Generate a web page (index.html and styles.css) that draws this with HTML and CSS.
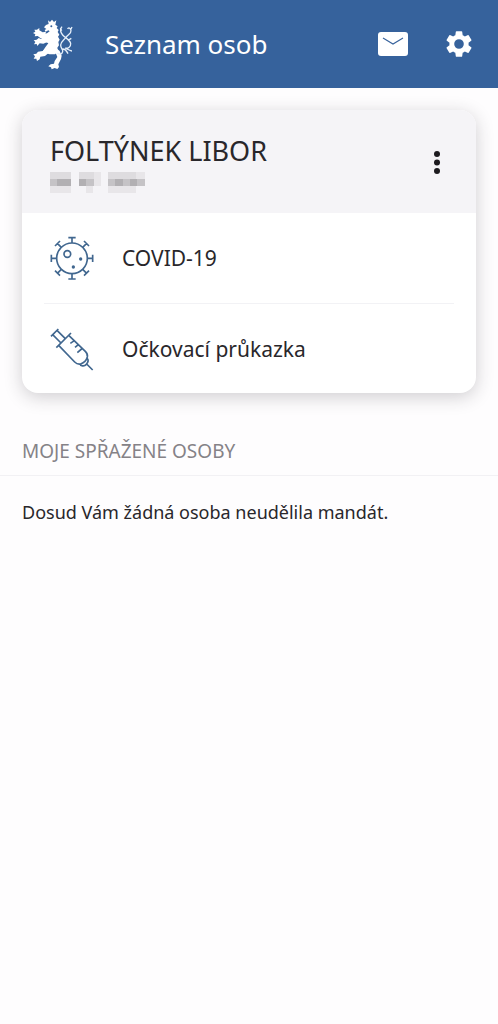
FILE: index.html
```html
<!DOCTYPE html>
<html lang="cs">
<head>
  <meta charset="UTF-8" />
  <title>Seznam osob</title>
  <meta name="viewport" content="width=device-width, initial-scale=1.0" />
  <link rel="stylesheet" href="styles.css">
</head>
<body>

  <header class="header">
    <svg class="logo" viewBox="25 20 120 153" aria-hidden="true">
      <!-- crown, head, body -->
      <path class="lion" d="M70 24l6 5 6-7 6 7 7-5-3 13 7 5-3 5 6 6-3 6 5 8-4 6 5 9-4 7 2 10-5 7 2 10-9 10-16 0-14-4-6-7 8-12 8-10-8-4-10-6-6-10 8-8 12-2 8-6-4-3-8 4-3-5 5-3-7-5 6-7 8-3z" />
      <!-- front legs -->
      <path class="lion" d="M64 58l-10 2-10-6 0-7-7 5-8 0 3 6-7 4 7 4-2 6 9-1 8 6 12 1zM62 78l-12 2-8-3-6 5-9 2 5 5-4 7 8-1 2 6 7-8 11 1 14-6z" />
      <!-- hind legs -->
      <path class="lion" d="M66 106l-12 10-14 2-5 6-9 2 5 6-4 7 8 0 2 7 8-5 2-8 14-2 14-12zM80 116l14 8 4 10-8 12-2 8-10 2-7 6 8 3 2 6 9-4 8 3 5-6-2-8 8-16 2-10-6-14-10-8z" />
      <path class="tail" d="M98 122c8 6 14 4 16-4c2-6-6-10-6-20c0-10 9-14 15-22c8-10 17-12 16-21c-1-8-8-11-10-5M112 43c-6 8-5 17 2 25c8 9 23 15 24 26c1 10-9 16-17 13M114 110c6 0 13 8 16 14M107 46l4 9M138 52l4-8M130 84l10-6M122 108c8 2 14 8 20 8" />
      <circle class="eye" cx="80" cy="42" r="3" />
    </svg>
    <h1>Seznam osob</h1>
    <button class="icon-btn" type="button" aria-label="Zprávy">
      <svg class="icon" viewBox="0 0 32 32">
        <rect x="1" y="4" width="30" height="24" rx="3" fill="#fff" />
        <path d="M6 10l10 6 10-6" fill="none" stroke="#36629c" stroke-width="1.1" />
      </svg>
    </button>
    <button class="icon-btn" type="button" aria-label="Nastavení">
      <svg class="icon" viewBox="0 0 24 24">
        <path fill="#fff" d="M19.14 12.94c.04-.3.06-.61.06-.94 0-.32-.02-.64-.07-.94l2.03-1.58a.49.49 0 0 0 .12-.61l-1.92-3.32a.49.49 0 0 0-.59-.22l-2.39.96a7 7 0 0 0-1.62-.94l-.36-2.54a.48.48 0 0 0-.48-.41h-3.84a.48.48 0 0 0-.47.41l-.36 2.54c-.59.24-1.13.57-1.62.94l-2.39-.96a.48.48 0 0 0-.59.22L2.74 8.87a.48.48 0 0 0 .12.61l2.03 1.58c-.05.3-.09.63-.09.94s.02.64.07.94l-2.03 1.58a.49.49 0 0 0-.12.61l1.92 3.32c.12.22.37.29.59.22l2.39-.96c.5.38 1.03.7 1.62.94l.36 2.54c.05.24.24.41.48.41h3.84c.24 0 .44-.17.47-.41l.36-2.54a7 7 0 0 0 1.62-.94l2.39.96c.22.08.47 0 .59-.22l1.92-3.32a.48.48 0 0 0-.12-.61zM12 15.6a3.6 3.6 0 1 1 0-7.2 3.6 3.6 0 0 1 0 7.2z" />
      </svg>
    </button>
  </header>

  <main>
    <section class="card">
      <div class="card-head">
        <div class="person">
          <h2>FOLTÝNEK LIBOR</h2>
          <!-- hidden birth date -->
          <svg class="masked" viewBox="0 0 96 21" shape-rendering="crispEdges" aria-hidden="true">
            <path fill="#dedcdf" d="M0 0h21v7H0zM29 0h15v7H29zM58 0h28v7H58z" />
            <path fill="#c5c3c6" d="M0 7h21v7H0zM29 7h15v7H29zM58 7h37v7H58z" />
            <path fill="#b2b0b3" d="M7 7h14v7H7zM29 7h7v7h-7zM65 7h8v7h-8zM80 7h7v7h-7z" />
            <path fill="#e8e6e9" d="M0 14h21v7H0zM36 14h7v7h-7zM44 0h7v14h-7zM58 14h28v7H58zM86 0h9v7h-9z" />
          </svg>
        </div>
        <button class="icon-btn" type="button" aria-label="Další možnosti">
          <svg class="icon" viewBox="0 0 32 32" fill="#1d1b1f">
            <circle cx="16" cy="8" r="3" />
            <circle cx="16" cy="16.5" r="3" />
            <circle cx="16" cy="25" r="3" />
          </svg>
        </button>
      </div>

      <nav class="card-list">
        <a class="row" href="#covid">
          <svg class="row-icon" viewBox="30 33 132 132">
            <circle cx="96" cy="100" r="46" />
            <circle cx="82" cy="87" r="10" />
            <circle class="dot" cx="122" cy="102" r="5" />
            <circle class="dot" cx="100" cy="126" r="5" />
            <path d="M96 54V38M85 38h22M96 146v16M85 162h22M50 100H34M34 89v22M142 100h16M158 89v22M128 67l12-12M132 48l15 15M64 67L52 55M45 63l15-15M128 133l12 12M132 152l15-15M64 133l-12 12M45 137l15 15" />
          </svg>
          <span>COVID-19</span>
        </a>
        <a class="row" href="#ockovani">
          <svg class="row-icon" viewBox="30 33 132 132">
            <path d="M33 61l22-22M38 56l25 25M51 43l25 25M49 95l44-44M56 88l48 50q8 8 18 6q16-6 20-21q2-9-6-17L87 59M91 82l12-8M105 94l11-9M112 110l16-14M119 142c2 9 14 10 20 3s7-14 2-19M140 144l18 18" />
          </svg>
          <span>Očkovací průkazka</span>
        </a>
      </nav>
    </section>

    <h3 class="section-title">MOJE SPŘAŽENÉ OSOBY</h3>
    <p class="empty">Dosud Vám žádná osoba neudělila mandát.</p>
  </main>

</body>
</html>
```
FILE: styles.css
```css
* {
  box-sizing: border-box;
}
body {
  margin: 0;
  font-family: "Noto Sans", sans-serif;
  background: #fefdfe;
  color: #29272b;
}
h1, h2, h3, p {
  margin: 0;
  font-weight: 400;
}

/* Top bar */
.header {
  display: flex;
  align-items: center;
  height: 88px;
  padding: 0 23px 0 33px;
  background: #36629c;
  color: #fff;
}
.header h1 {
  flex: 1;
  padding-left: 32px;
  font-size: 26px;
  line-height: 32px;
}
.logo {
  width: 40px;
  height: 51px;
}
.lion {
  fill: #fff;
}
.tail {
  fill: none;
  stroke: #e6effa;
  stroke-width: 4;
}
.eye {
  fill: #36629c;
}

.icon-btn {
  display: flex;
  padding: 0;
  border: none;
  background: none;
  cursor: pointer;
}
.icon-btn + .icon-btn {
  margin-left: 34px;
}
.icon {
  width: 32px;
  height: 32px;
}

/* Person card */
.card {
  margin: 22px 22px 0;
  border-radius: 16px;
  background: #fff;
  box-shadow: 0 4px 18px rgba(40, 35, 45, 0.22);
  overflow: hidden;
}
.card-head {
  display: flex;
  align-items: center;
  justify-content: space-between;
  height: 103px;
  padding: 0 23px 0 28px;
  background: #f5f4f7;
}
.person h2 {
  font-size: 27px;
  line-height: 42px;
}
.masked {
  display: block;
  width: 96px;
  height: 21px;
}

.card-list {
  padding: 0 22px;
}
.row {
  display: flex;
  align-items: center;
  gap: 28px;
  height: 90px;
  padding-left: 6px;
  font-size: 21px;
  line-height: 30px;
  color: inherit;
  text-decoration: none;
}
.row + .row {
  border-top: 1px solid #f2f2f5;
}
.row-icon {
  width: 44px;
  height: 44px;
  fill: none;
  stroke: #41678f;
  stroke-width: 5;
}
.row-icon .dot {
  fill: #41678f;
  stroke: none;
}

/* Linked persons */
.section-title {
  margin-top: 34px;
  padding: 9px 22px;
  border-bottom: 1px solid #f2f1f4;
  font-size: 19px;
  line-height: 30px;
  color: #858287;
}
.empty {
  padding: 21px 22px;
  font-size: 18px;
  line-height: 30px;
}
```
